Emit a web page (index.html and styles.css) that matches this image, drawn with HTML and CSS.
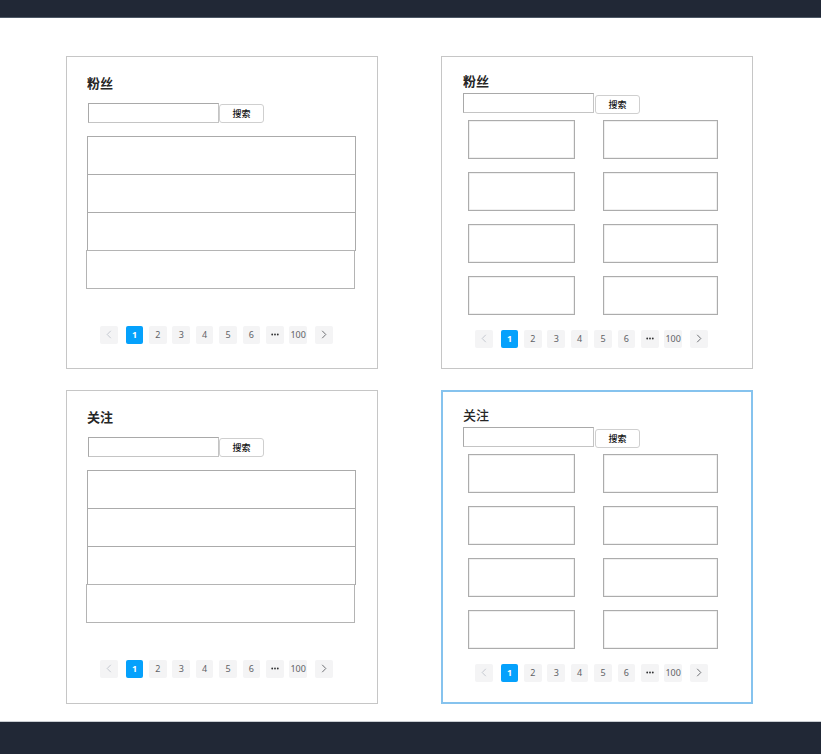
FILE: index.html
```html
<!DOCTYPE html>
<html lang="zh-CN">
<head>
<meta charset="utf-8">
<title>粉丝 / 关注</title>
<link rel="stylesheet" href="styles.css">
</head>
<body>
<header class="topbar"></header>
<main class="board">
  <section class="panel panel-list">
    <h2 class="title">粉丝</h2>
    <div class="search"><input class="search-input" type="text"><button class="search-btn">搜索</button></div>
    <div class="rows">
      <div class="row"></div><div class="row"></div><div class="row"></div><div class="row row-last"></div>
    </div>
    <nav class="pager">
      <span class="pg pg-prev"><svg width="6" height="9" viewBox="0 0 6 9"><path d="M4.8 0.8 L1.2 4.5 L4.8 8.2" fill="none" stroke="#c0c4cc" stroke-width="0.9"/></svg></span>
      <span class="pg pg-active">1</span><span class="pg">2</span><span class="pg">3</span><span class="pg">4</span><span class="pg">5</span><span class="pg">6</span>
      <span class="pg"><svg width="8" height="3" viewBox="0 0 8 3"><circle cx="1.2" cy="1.5" r="0.9" fill="#303133"/><circle cx="4" cy="1.5" r="0.9" fill="#303133"/><circle cx="6.8" cy="1.5" r="0.9" fill="#303133"/></svg></span>
      <span class="pg">100</span>
      <span class="pg pg-next"><svg width="6" height="9" viewBox="0 0 6 9"><path d="M1.2 0.8 L4.8 4.5 L1.2 8.2" fill="none" stroke="#606266" stroke-width="0.9"/></svg></span>
    </nav>
  </section>

  <section class="panel panel-grid">
    <h2 class="title">粉丝</h2>
    <div class="search"><input class="search-input" type="text"><button class="search-btn">搜索</button></div>
    <div class="cards">
      <div class="card"></div><div class="card"></div>
      <div class="card"></div><div class="card"></div>
      <div class="card"></div><div class="card"></div>
      <div class="card"></div><div class="card"></div>
    </div>
    <nav class="pager">
      <span class="pg pg-prev"><svg width="6" height="9" viewBox="0 0 6 9"><path d="M4.8 0.8 L1.2 4.5 L4.8 8.2" fill="none" stroke="#c0c4cc" stroke-width="0.9"/></svg></span>
      <span class="pg pg-active">1</span><span class="pg">2</span><span class="pg">3</span><span class="pg">4</span><span class="pg">5</span><span class="pg">6</span>
      <span class="pg"><svg width="8" height="3" viewBox="0 0 8 3"><circle cx="1.2" cy="1.5" r="0.9" fill="#303133"/><circle cx="4" cy="1.5" r="0.9" fill="#303133"/><circle cx="6.8" cy="1.5" r="0.9" fill="#303133"/></svg></span>
      <span class="pg">100</span>
      <span class="pg pg-next"><svg width="6" height="9" viewBox="0 0 6 9"><path d="M1.2 0.8 L4.8 4.5 L1.2 8.2" fill="none" stroke="#606266" stroke-width="0.9"/></svg></span>
    </nav>
  </section>

  <section class="panel panel-list">
    <h2 class="title">关注</h2>
    <div class="search"><input class="search-input" type="text"><button class="search-btn">搜索</button></div>
    <div class="rows">
      <div class="row"></div><div class="row"></div><div class="row"></div><div class="row row-last"></div>
    </div>
    <nav class="pager">
      <span class="pg pg-prev"><svg width="6" height="9" viewBox="0 0 6 9"><path d="M4.8 0.8 L1.2 4.5 L4.8 8.2" fill="none" stroke="#c0c4cc" stroke-width="0.9"/></svg></span>
      <span class="pg pg-active">1</span><span class="pg">2</span><span class="pg">3</span><span class="pg">4</span><span class="pg">5</span><span class="pg">6</span>
      <span class="pg"><svg width="8" height="3" viewBox="0 0 8 3"><circle cx="1.2" cy="1.5" r="0.9" fill="#303133"/><circle cx="4" cy="1.5" r="0.9" fill="#303133"/><circle cx="6.8" cy="1.5" r="0.9" fill="#303133"/></svg></span>
      <span class="pg">100</span>
      <span class="pg pg-next"><svg width="6" height="9" viewBox="0 0 6 9"><path d="M1.2 0.8 L4.8 4.5 L1.2 8.2" fill="none" stroke="#606266" stroke-width="0.9"/></svg></span>
    </nav>
  </section>

  <section class="panel panel-grid panel-focus">
    <h2 class="title title-light">关注</h2>
    <div class="search"><input class="search-input" type="text"><button class="search-btn">搜索</button></div>
    <div class="cards">
      <div class="card"></div><div class="card"></div>
      <div class="card"></div><div class="card"></div>
      <div class="card"></div><div class="card"></div>
      <div class="card"></div><div class="card"></div>
    </div>
    <nav class="pager">
      <span class="pg pg-prev"><svg width="6" height="9" viewBox="0 0 6 9"><path d="M4.8 0.8 L1.2 4.5 L4.8 8.2" fill="none" stroke="#c0c4cc" stroke-width="0.9"/></svg></span>
      <span class="pg pg-active">1</span><span class="pg">2</span><span class="pg">3</span><span class="pg">4</span><span class="pg">5</span><span class="pg">6</span>
      <span class="pg"><svg width="8" height="3" viewBox="0 0 8 3"><circle cx="1.2" cy="1.5" r="0.9" fill="#303133"/><circle cx="4" cy="1.5" r="0.9" fill="#303133"/><circle cx="6.8" cy="1.5" r="0.9" fill="#303133"/></svg></span>
      <span class="pg">100</span>
      <span class="pg pg-next"><svg width="6" height="9" viewBox="0 0 6 9"><path d="M1.2 0.8 L4.8 4.5 L1.2 8.2" fill="none" stroke="#606266" stroke-width="0.9"/></svg></span>
    </nav>
  </section>
</main>
<footer class="footbar"></footer>
</body>
</html>
```
FILE: styles.css
```css
* { box-sizing: border-box; }
html, body { margin: 0; padding: 0; background: #ffffff; }
body {
  font-family: "Noto Sans", "Noto Sans CJK SC", sans-serif;
  color: #303133;
}
.topbar {
  height: 18px;
  background: #212836;
  border-bottom: 1px solid #4d5866;
}
.footbar {
  height: 33px;
  background: #212836;
  border-top: 1px solid #c9cdd2;
}
.board {
  display: grid;
  grid-template-columns: 312px 312px;
  grid-template-rows: 313px 314px;
  column-gap: 63px;
  row-gap: 21px;
  padding: 38px 67px 17px 66px;
}
.panel {
  border: 1px solid #c6c6c6;
  display: flex;
  flex-direction: column;
}
.panel-list { padding: 19px 21px 0 20px; }
.panel-grid { padding: 17px 20px 0 21px; }
.panel-focus { border: 2px solid #86c3ee; padding: 16px 19px 0 20px; }
.title {
  margin: 0;
  font-family: "Noto Sans CJK SC", sans-serif;
  font-size: 13px;
  line-height: 13px;
  font-weight: 700;
  color: #262626;
}
.title-light { font-weight: 500; }
.search { display: flex; align-items: flex-start; }
.panel-list .search { margin: 14px 0 0 1px; }
.panel-grid .search { margin-top: 6px; }
.search-input {
  width: 131px;
  height: 20px;
  margin: 0;
  padding: 0 4px;
  border: 1px solid #a9a9a9;
  border-right-color: #c4c4c4;
  border-bottom-color: #c4c4c4;
  background: #fff;
  outline: none;
}
.search-btn {
  width: 45px;
  height: 19px;
  margin: 1px 0 0 0;
  padding: 0;
  border: 1px solid #cfcfcf;
  border-radius: 3px;
  background: #fff;
  font-family: "Noto Sans CJK SC", sans-serif;
  font-size: 9px;
  font-weight: 500;
  line-height: 17px;
  color: #111;
}
.panel-grid .search-btn { margin-top: 2px; margin-left: 1px; }
.rows {
  margin-top: 13px;
  display: flex;
  flex-direction: column;
}
.row {
  height: 39px;
  width: 269px;
  border: 1px solid #ababab;
  margin-top: -1px;
}
.row:first-child { margin-top: 0; }
.row-last { margin-left: -1px; border-color: #b4b4b4; }
.cards {
  margin: 6px 0 0 5px;
  display: grid;
  grid-template-columns: 107px 115px;
  grid-auto-rows: 39px;
  column-gap: 28px;
  row-gap: 13px;
}
.card {
  border: 1px solid #acacac;
  box-shadow: inset 0 0 0 0.5px #e2e2e2;
}
.pager {
  display: flex;
  align-items: center;
  gap: 5.7px;
}
.panel-list .pager { margin: 37px 0 0 13px; }
.panel-grid .pager { margin: 15px 0 0 12px; }
.pg {
  width: 17.7px;
  height: 17.7px;
  border-radius: 2px;
  background: #f4f4f5;
  color: #606266;
  font-size: 9px;
  font-family: "Noto Sans", "Open Sans", sans-serif;
  display: flex;
  align-items: center;
  justify-content: center;
}
.pg-prev { margin-right: 2.3px; }
.pg-next { margin-left: 2.3px; }
.pg-active {
  background: #05a1fc;
  color: #fff;
  font-weight: 700;
}
```
